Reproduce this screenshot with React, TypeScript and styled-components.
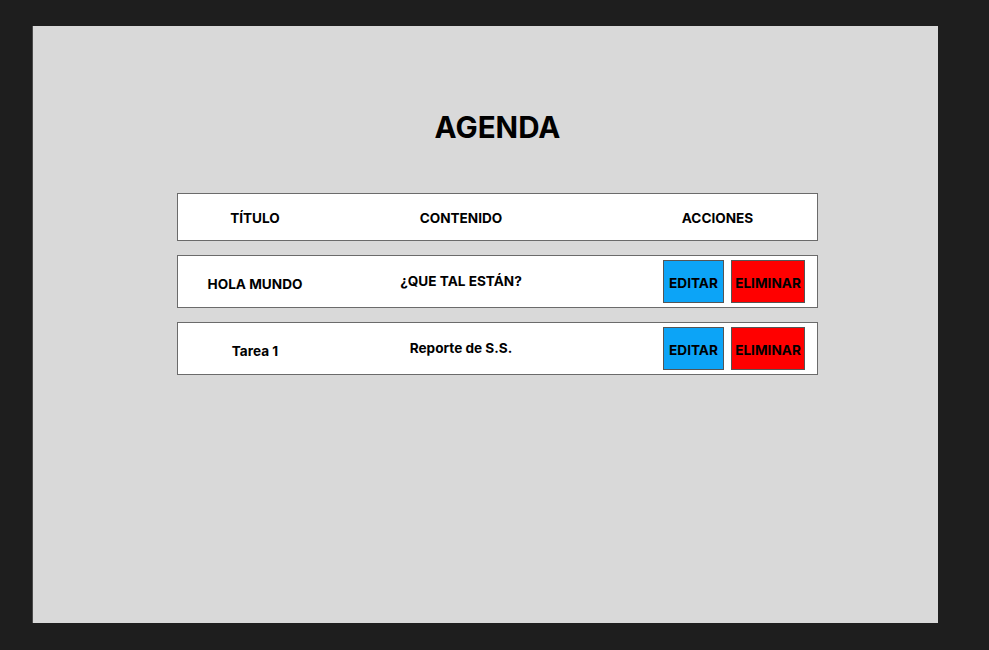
import React from "react";
import styled, { createGlobalStyle } from "styled-components";

const Global = createGlobalStyle`
  html, body { margin: 0; padding: 0; background: #1e1e1e; }
  body { font-family: Inter, "Liberation Sans", sans-serif; }
`;

const Page = styled.div`
  width: 989px;
  height: 650px;
  background: #1e1e1e;
  padding: 26px 0 0 32px;
  box-sizing: border-box;
`;

const Frame = styled.div`
  width: 906px;
  height: 597px;
  box-sizing: border-box;
  background: #d9d9d9;
  border-left: 1px solid #4a4a4a;
  padding: 0 120px 0 144px;
  display: flex;
  flex-direction: column;
`;

const Title = styled.h1`
  margin: 0;
  padding-top: 83px;
  height: 167px;
  box-sizing: border-box;
  text-align: center;
  font-size: 29.6px;
  line-height: 36px;
  font-weight: 700;
  color: #000;
`;

const Row = styled.div<{ $h: number; $mb: number }>`
  width: 641px;
  height: ${(p) => p.$h}px;
  margin-bottom: ${(p) => p.$mb}px;
  box-sizing: border-box;
  background: #fff;
  border: 1px solid #6b6b6b;
  display: grid;
  grid-template-columns: 156px 256px 1fr;
  align-items: center;
`;

const Cell = styled.div<{ $dy?: number; $pl?: number }>`
  text-align: center;
  font-size: 13.6px;
  font-weight: 700;
  color: #000;
  position: relative;
  top: ${(p) => p.$dy ?? 0}px;
  padding-left: ${(p) => p.$pl ?? 0}px;
  padding-right: 2px;
`;

const Actions = styled.div`
  display: flex;
  justify-content: flex-end;
  gap: 7px;
  padding-right: 12px;
`;

const Btn = styled.button<{ $bg: string; $w: number }>`
  width: ${(p) => p.$w}px;
  height: 43px;
  background: ${(p) => p.$bg};
  border: 1px solid #555;
  padding: 3px 0 0;
  margin: 0;
  font-family: Inter, "Liberation Sans", sans-serif;
  font-size: 13.6px;
  font-weight: 700;
  color: #000;
  display: flex;
  align-items: center;
  justify-content: center;
  box-sizing: border-box;
  white-space: nowrap;
`;

const rows = [
  { t: "HOLA MUNDO", c: "¿QUE TAL ESTÁN?" },
  { t: "Tarea 1", c: "Reporte de S.S." },
];

export default function App() {
  return (
    <>
      <Global />
      <Page>
        <Frame>
          <Title>AGENDA</Title>
          <Row $h={48} $mb={14}>
            <Cell $dy={1}>TÍTULO</Cell>
            <Cell $dy={1}>CONTENIDO</Cell>
            <Cell $dy={1} $pl={30}>ACCIONES</Cell>
          </Row>
          {rows.map((r) => (
            <Row key={r.t} $h={53} $mb={14}>
              <Cell $dy={2}>{r.t}</Cell>
              <Cell $dy={-1}>{r.c}</Cell>
              <Actions>
                <Btn $bg="#0ca4f7" $w={61}>EDITAR</Btn>
                <Btn $bg="#ff0000" $w={74}>ELIMINAR</Btn>
              </Actions>
            </Row>
          ))}
        </Frame>
      </Page>
    </>
  );
}
